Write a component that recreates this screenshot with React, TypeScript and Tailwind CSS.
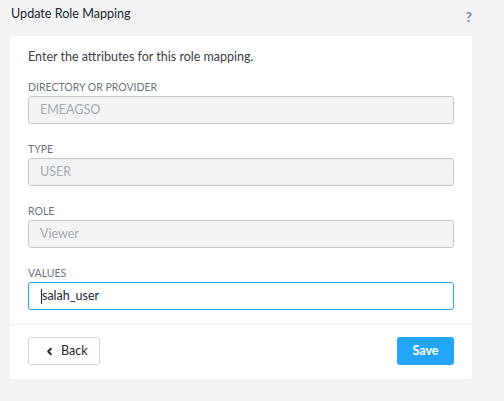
import { ChevronLeft } from "lucide-react";

const fields = [
  { label: "DIRECTORY OR PROVIDER", value: "EMEAGSO" },
  { label: "TYPE", value: "USER" },
  { label: "ROLE", value: "Viewer" },
];

export default function App() {
  return (
    <div className="h-[401px] w-[504px] bg-[#f2f3f5] pt-[5px] font-['Lato',sans-serif] text-[#22272e]">
      <div className="flex h-[31px] items-start justify-between pl-[11px] pr-[32px]">
        <span className="text-[12.6px] leading-[18px]">Update Role Mapping</span>
        <span className="mt-[3px] text-[14px] font-black leading-[18px] text-[#8c959f]">?</span>
      </div>
      <div className="ml-[10px] w-[462px] rounded-[3px] bg-white">
        <div className="px-[18px] pt-[12px] pb-[14px]">
          <p className="text-[12.5px] leading-[18px] text-[#394049]">
            Enter the attributes for this role mapping.
          </p>
          {fields.map((f, i) => (
            <div key={f.label} className={i === 0 ? "mt-[15px]" : "mt-[19px]"}>
              <div className="text-[10.5px] leading-[13px] text-[#6b7580]">{f.label}</div>
              <div className="mt-[2px] flex h-[28px] items-center rounded-[3px] border border-[#c6c8cb] bg-[#f2f3f5] px-[11px] text-[12.5px] text-[#a3abb4]">
                {f.value}
              </div>
            </div>
          ))}
          <div className="mt-[19px]">
            <div className="text-[10.5px] leading-[13px] text-[#6b7580]">VALUES</div>
            <div className="mt-[2px] flex h-[28px] items-center rounded-[3px] border border-[#2aa3f4] bg-white px-[12px] text-[12.5px] text-[#22272e]">
              <span className="h-[15px] w-px bg-[#22272e]" />
              <span>salah_user</span>
            </div>
          </div>
        </div>
        <div className="flex items-center justify-between border-t border-[#eef0f2] px-[18px] pt-[12px] pb-[14px]">
          <button className="flex h-[28px] w-[72px] items-center gap-[6px] rounded-[3px] border border-[#d0d3d7] bg-white pl-[15px] text-[12.5px] text-[#22272e]">
            <ChevronLeft size={11} strokeWidth={4} />
            Back
          </button>
          <button className="h-[28px] w-[57px] rounded-[3px] bg-[#23a6f7] text-[12.5px] font-bold text-white">
            Save
          </button>
        </div>
      </div>
    </div>
  );
}
